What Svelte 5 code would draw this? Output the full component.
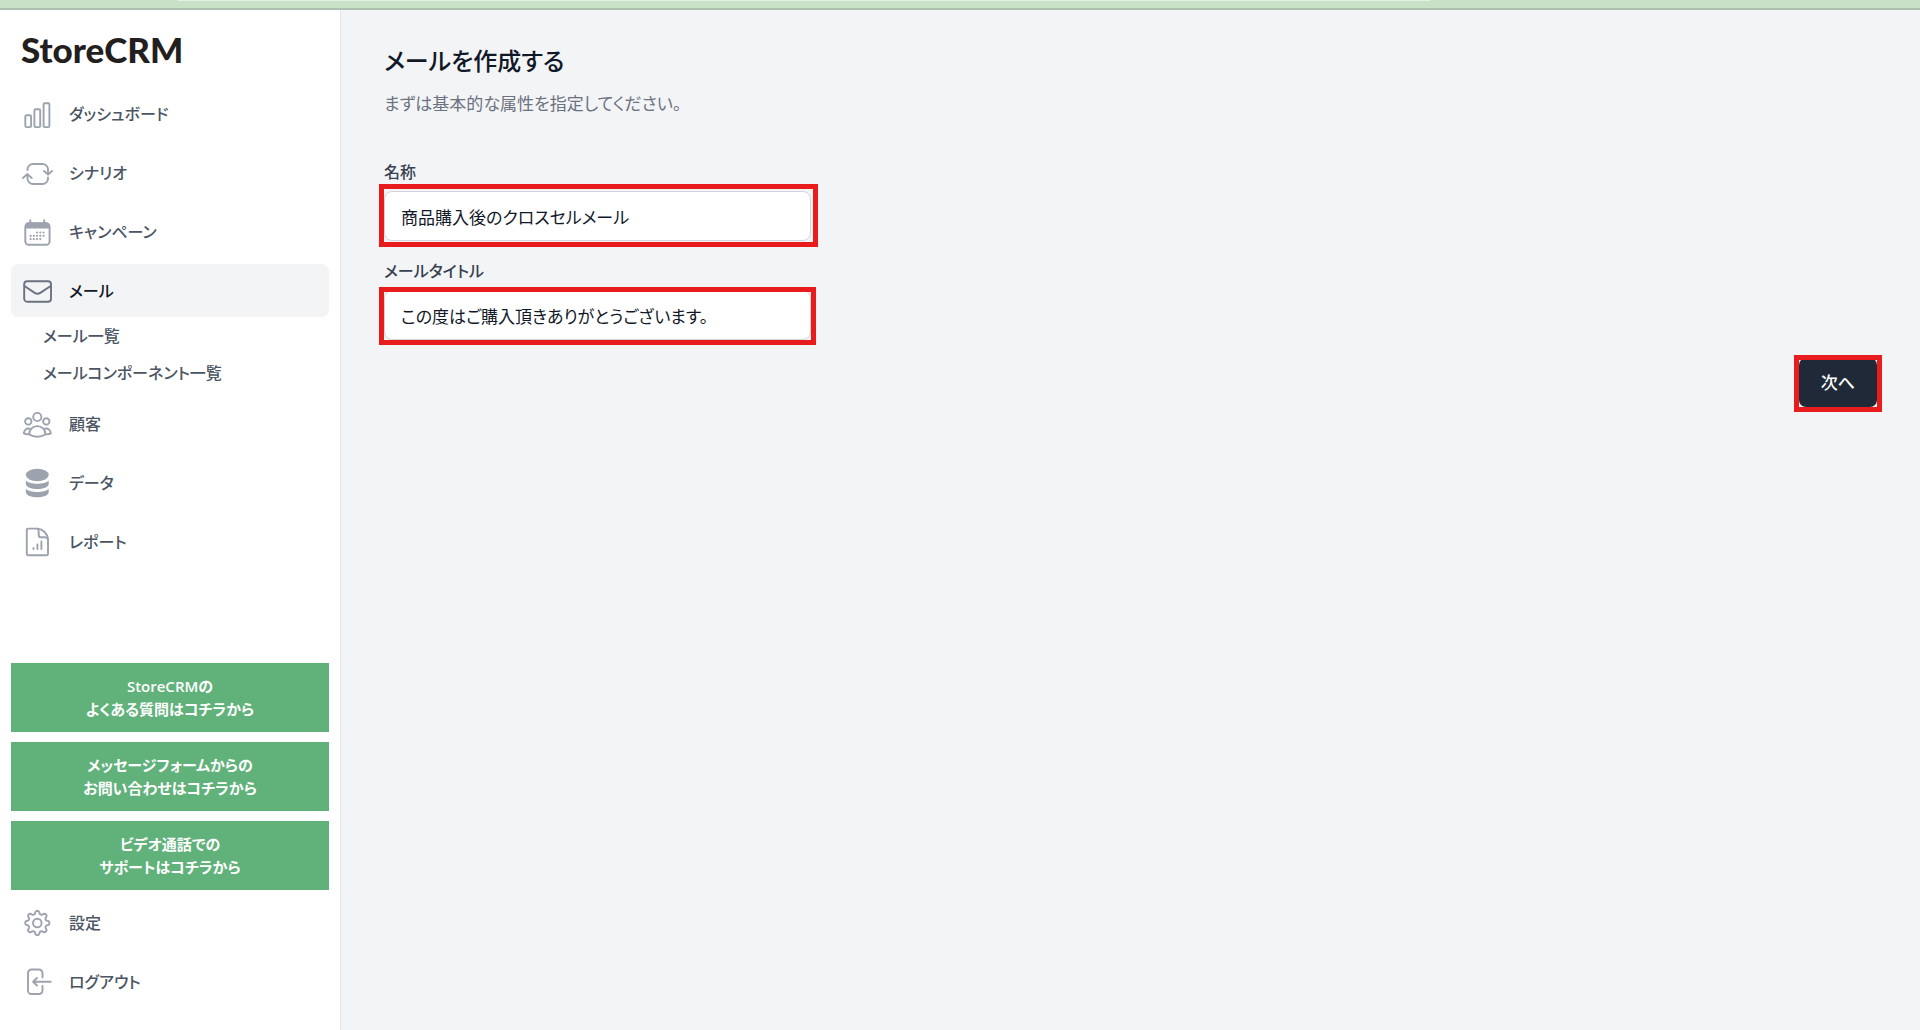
<script>
  let name  = $state('商品購入後のクロスセルメール');
  let title = $state('この度はご購入頂きありがとうございます。');

  const mainNav = [
    { icon: 'chart',    label: 'ダッシュボード' },
    { icon: 'sync',     label: 'シナリオ' },
    { icon: 'calendar', label: 'キャンペーン' },
    { icon: 'mail',     label: 'メール', active: true, children: ['メール一覧', 'メールコンポーネント一覧'] },
    { icon: 'users',    label: '顧客' },
    { icon: 'database', label: 'データ' },
    { icon: 'report',   label: 'レポート' },
  ];

  const footNav = [
    { icon: 'cog',    label: '設定' },
    { icon: 'logout', label: 'ログアウト' },
  ];

  const support = [
    ['StoreCRMの', 'よくある質問はコチラから'],
    ['メッセージフォームからの', 'お問い合わせはコチラから'],
    ['ビデオ通話での', 'サポートはコチラから'],
  ];

  const dots = [
    [16, 16.5], [19.3, 16.5], [22.6, 16.5],
    [9.6, 19.8], [12.8, 19.8], [16, 19.8], [19.3, 19.8], [22.6, 19.8],
    [9.6, 23.1], [12.8, 23.1], [16, 23.1], [19.3, 23.1],
  ];

  // Outline of the settings cog: radius swings between root and tip, 8 teeth
  function cogPath() {
    const pts = [];
    for (let i = 0; i < 160; i++) {
      const a = (i / 160) * Math.PI * 2;
      const wave = Math.tanh(1.8 * Math.cos(a * 8)) / Math.tanh(1.8);
      const r = 10.6 + 1.5 * wave;
      pts.push(`${(16.3 + r * Math.cos(a)).toFixed(2)} ${(16 + r * Math.sin(a)).toFixed(2)}`);
    }
    return `M${pts.join('L')}Z`;
  }
</script>

{#snippet icon(kind)}
  <svg class="icon" viewBox="0 0 32 32" aria-hidden="true">
    {#if kind === 'chart'}
      <rect x="4.3" y="17.3" width="5.8" height="11.8" rx="1.2" />
      <rect x="13.4" y="11.3" width="5.8" height="17.8" rx="1.2" />
      <rect x="22.6" y="5.3" width="5.8" height="23.8" rx="1.2" />
    {:else if kind === 'sync'}
      <path d="M6.5 13v-.5A5.500 5.500 0 0 1 12 7h9.500a5.500 5.500 0 0 1 5.500 5.500v4.800" />
      <path d="M23 14l4.100 3.600L31 14" />
      <path d="M27 20.500v1a5.500 5.500 0 0 1-5.500 5.500H12a5.500 5.500 0 0 1-5.500-5.500v-4" />
      <path d="M2 21l4.300-3.900 4.400 3.900" />
    {:else if kind === 'calendar'}
      <rect x="4.3" y="7.3" width="24.3" height="21.5" rx="3.5" />
      <path class="solid" d="M4 12.500V10a3.500 3.500 0 0 1 3.500-3.500h18A3.500 3.500 0 0 1 29 10v2.500z" />
      <path d="M9.300 4.300v3M23.200 4.300v3" />
      {#each dots as [x, y]}
        <circle class="solid" cx={x} cy={y} r="1.1" />
      {/each}
    {:else if kind === 'mail'}
      <rect x="3.2" y="6.3" width="26.8" height="20.5" rx="3" />
      <path d="M3.500 11l10.200 6.900q2.800 1.800 5.600 0L29.700 11" />
    {:else if kind === 'users'}
      <circle cx="16.3" cy="9" r="4.1" />
      <circle cx="7.3" cy="13.4" r="3.2" />
      <circle cx="25.3" cy="13.4" r="3.2" />
      <path d="M8 26.300c.4-4.900 3.800-8.200 8.300-8.200s7.900 3.300 8.300 8.200c-4.700 3.300-11.900 3.300-16.600 0z" />
      <path d="M8.800 20.700c-3.300-.7-5.700 1.100-6 4.700q2 1.100 5.200.9M23.800 20.700c3.300-.7 5.700 1.100 6 4.700q-2 1.100-5.200.9" />
    {:else if kind === 'database'}
      <ellipse class="solid" cx="16.3" cy="8" rx="11.4" ry="6.2" />
      <path class="solid" d="M4.900 13.500c4 4.400 18.800 4.400 22.800 0v3.200c0 7-22.800 7-22.800 0z" />
      <path class="solid" d="M4.900 21.700c4 4.400 18.800 4.400 22.800 0v3.200c0 7-22.800 7-22.800 0z" />
    {:else if kind === 'report'}
      <path d="M7 2.600h9.500c5.500.5 10 5 10.500 10.500v15a1.200 1.200 0 0 1-1.200 1.200H7a1.200 1.200 0 0 1-1.200-1.200V3.800A1.200 1.200 0 0 1 7 2.600z" />
      <path d="M16.500 2.700q1.200 1.300 1.200 3v3.600q0 2 2 2h3.800q2.200.1 3.300 1.500" />
      <path d="M12.500 22v1M16.400 18.500v4.500M20.400 15.500v7.500" />
    {:else if kind === 'cog'}
      <path d={cogPath()} />
      <circle cx="16.3" cy="16" r="4.3" />
    {:else if kind === 'logout'}
      <path d="M21.500 11.500V7A3.500 3.500 0 0 0 18 3.500h-7.500A3.500 3.500 0 0 0 7 7v17.500a3.500 3.500 0 0 0 3.500 3.500H18a3.500 3.500 0 0 0 3.500-3.500V20" />
      <path d="M29.700 15.700H12.300M16 11.900l-3.900 3.800L16 19.500" />
    {/if}
  </svg>
{/snippet}

{#snippet navLink(item)}
  <a class="nav-link" class:active={item.active} href="#{item.icon}">
    {@render icon(item.icon)}
    <span>{item.label}</span>
  </a>
{/snippet}

<div class="app">
  <div class="topbar"><div class="topbar-tab"></div></div>

  <aside class="sidebar">
    <div>
      <a class="logo" href="#top">StoreCRM</a>
      <nav>
        <ul class="nav">
          {#each mainNav as item}
            <li>
              {@render navLink(item)}
              {#if item.children}
                <ul class="subnav">
                  {#each item.children as child}
                    <li><a href="#mail">{child}</a></li>
                  {/each}
                </ul>
              {/if}
            </li>
          {/each}
        </ul>
      </nav>
    </div>

    <div class="side-foot">
      <div class="support">
        {#each support as [first, second]}
          <a class="support-link" href="#support">{first}<br />{second}</a>
        {/each}
      </div>
      <ul class="nav">
        {#each footNav as item}
          <li>{@render navLink(item)}</li>
        {/each}
      </ul>
    </div>
  </aside>

  <main class="main">
    <h1>メールを作成する</h1>
    <p class="lead">まずは基本的な属性を指定してください。</p>

    <form onsubmit={(e) => e.preventDefault()}>
      <div class="field">
        <label for="name">名称</label>
        <div class="marked loose">
          <input id="name" type="text" bind:value={name} />
        </div>
      </div>
      <div class="field">
        <label for="title">メールタイトル</label>
        <div class="marked">
          <input id="title" type="text" bind:value={title} />
        </div>
      </div>
      <div class="actions">
        <div class="marked">
          <button class="next" type="submit">次へ</button>
        </div>
      </div>
    </form>
  </main>
</div>

<style>
  :global(body) {
    margin: 0;
    background: #f3f4f6;
  }

  .app {
    min-height: 100vh;
    display: grid;
    grid-template-columns: 341px 1fr;
    grid-template-rows: auto 1fr;
    font-family: 'Open Sans', 'Noto Sans CJK JP', sans-serif;
    font-size: 17px;
    line-height: 26px;
    font-feature-settings: 'palt';
    color: #111827;
  }
  .app * { box-sizing: border-box; }

  .topbar {
    grid-column: 1 / -1;
    height: 10px;
    background: #c9e1c6;
    border-bottom: 2px solid #adbfae;
  }
  .topbar-tab {
    height: 1px;
    margin: 0 490px 0 178px;
    background: #e6f1e5;
  }

  /* Sidebar */
  .sidebar {
    display: flex;
    flex-direction: column;
    justify-content: space-between;
    gap: 24px;
    padding: 16px 11px 22px;
    background: #fff;
    border-right: 1px solid #e5e7eb;
  }
  .logo {
    display: block;
    padding: 2px 10px 17px;
    font-family: Lato, sans-serif;
    font-weight: 900;
    font-size: 35px;
    line-height: 42px;
    color: #231f20;
    text-decoration: none;
  }
  .nav, .subnav {
    list-style: none;
    margin: 0;
    padding: 0;
  }
  .nav {
    display: flex;
    flex-direction: column;
    gap: 6px;
  }
  .nav-link {
    display: flex;
    align-items: center;
    gap: 16px;
    height: 53px;
    padding: 0 10px;
    border-radius: 7px;
    font-size: 16px;
    font-weight: 500;
    color: #4b5563;
    text-decoration: none;
  }
  .nav-link.active {
    background: #f3f4f6;
    color: #111827;
  }
  .icon {
    width: 32px;
    height: 32px;
    flex-shrink: 0;
    fill: none;
    stroke: #9ca3af;
    stroke-width: 1.9;
    stroke-linecap: round;
    stroke-linejoin: round;
  }
  .active .icon { stroke: #6b7280; }
  .icon .solid {
    fill: #9ca3af;
    stroke: none;
  }
  .subnav a {
    display: block;
    padding: 6px 32px 5px;
    font-size: 16px;
    font-weight: 500;
    color: #4b5563;
    text-decoration: none;
  }

  .side-foot {
    display: flex;
    flex-direction: column;
    gap: 6px;
  }
  .support {
    display: flex;
    flex-direction: column;
    gap: 10px;
  }
  .support-link {
    padding: 12px 8px 11px;
    background: #61b17b;
    color: #fff;
    font-size: 15px;
    line-height: 23px;
    font-weight: 600;
    text-align: center;
    text-decoration: none;
  }

  /* Form page */
  .main { padding: 34px 43px; }
  h1 {
    margin: 0 0 13px;
    font-size: 24px;
    line-height: 34px;
    font-weight: 500;
  }
  .lead {
    margin: 0 0 42px;
    color: #6b7280;
  }
  form {
    display: flex;
    flex-direction: column;
    gap: 17px;
  }
  .field {
    display: flex;
    flex-direction: column;
    gap: 6px;
    width: 100%;
    max-width: 427px;
  }
  label {
    font-size: 16px;
    font-weight: 500;
    color: #374151;
  }
  input {
    display: block;
    width: 100%;
    height: 50px;
    padding: 0 16px;
    border: 1px solid #d1d5db;
    border-radius: 8px;
    background: #fff;
    font: inherit;
    font-feature-settings: inherit;
    color: #111827;
    outline: none;
  }
  .actions {
    display: flex;
    justify-content: flex-end;
    padding-top: 1px;
  }
  .next {
    display: block;
    height: 49px;
    padding: 0 22px;
    border: none;
    border-radius: 7px;
    background: #1f2937;
    color: #fff;
    font: inherit;
    font-feature-settings: inherit;
    font-weight: 500;
    cursor: pointer;
  }
  .next:hover { background: #374151; }

  /* Red guide frames over the controls to fill in */
  .marked { position: relative; }
  .marked::after {
    content: '';
    position: absolute;
    inset: -3px -5px -5px;
    border: 5px solid #e81c1c;
    pointer-events: none;
  }
  .marked.loose::after { inset: -7px -7px -6px -5px; }
</style>
